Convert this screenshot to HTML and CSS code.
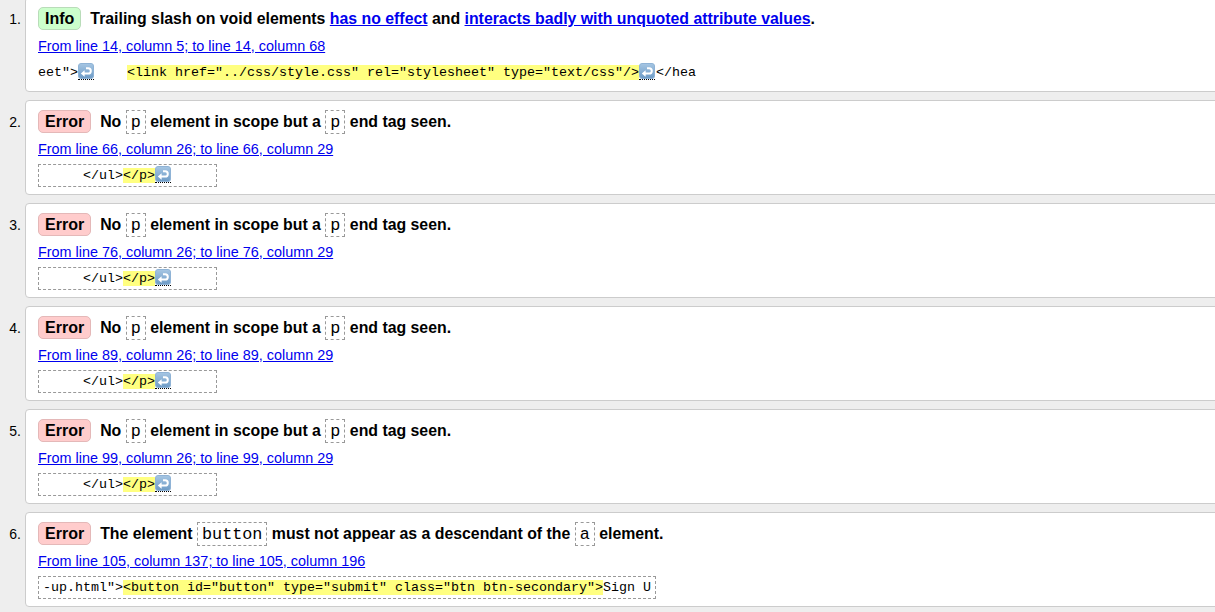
FILE: index.html
```html
<!DOCTYPE html>
<html lang="en">
<head>
<meta charset="utf-8">
<title>Validation results</title>
<link rel="stylesheet" href="styles.css">
</head>
<body>
<ol class="results">
  <li class="row">
    <span class="num">1.</span>
    <div class="card">
      <p class="msg"><strong class="badge info">Info</strong>Trailing slash on void elements <a href="#">has no effect</a> and <a href="#">interacts badly with unquoted attribute values</a>.</p>
      <p class="loc"><a href="#">From line 14, column 5; to line 14, column 68</a></p>
      <p class="ext"><code class="extract plain">eet"&gt;<b class="lf" title="Line break"><svg viewBox="0 0 16 16" width="16" height="16"><use href="#lfi"/></svg></b>    <mark>&lt;link href="../css/style.css" rel="stylesheet" type="text/css"/&gt;</mark><b class="lf" title="Line break"><svg viewBox="0 0 16 16" width="16" height="16"><use href="#lfi"/></svg></b>&lt;/hea</code></p>
    </div>
  </li>
  <li class="row">
    <span class="num">2.</span>
    <div class="card">
      <p class="msg"><strong class="badge error">Error</strong>No <code class="tag">p</code> element in scope but a <code class="tag">p</code> end tag seen.</p>
      <p class="loc"><a href="#">From line 66, column 26; to line 66, column 29</a></p>
      <p class="ext"><code class="extract">     &lt;/ul&gt;<mark>&lt;/p&gt;</mark><b class="lf" title="Line break"><svg viewBox="0 0 16 16" width="16" height="16"><use href="#lfi"/></svg></b>     </code></p>
    </div>
  </li>
  <li class="row">
    <span class="num">3.</span>
    <div class="card">
      <p class="msg"><strong class="badge error">Error</strong>No <code class="tag">p</code> element in scope but a <code class="tag">p</code> end tag seen.</p>
      <p class="loc"><a href="#">From line 76, column 26; to line 76, column 29</a></p>
      <p class="ext"><code class="extract">     &lt;/ul&gt;<mark>&lt;/p&gt;</mark><b class="lf" title="Line break"><svg viewBox="0 0 16 16" width="16" height="16"><use href="#lfi"/></svg></b>     </code></p>
    </div>
  </li>
  <li class="row">
    <span class="num">4.</span>
    <div class="card">
      <p class="msg"><strong class="badge error">Error</strong>No <code class="tag">p</code> element in scope but a <code class="tag">p</code> end tag seen.</p>
      <p class="loc"><a href="#">From line 89, column 26; to line 89, column 29</a></p>
      <p class="ext"><code class="extract">     &lt;/ul&gt;<mark>&lt;/p&gt;</mark><b class="lf" title="Line break"><svg viewBox="0 0 16 16" width="16" height="16"><use href="#lfi"/></svg></b>     </code></p>
    </div>
  </li>
  <li class="row">
    <span class="num">5.</span>
    <div class="card">
      <p class="msg"><strong class="badge error">Error</strong>No <code class="tag">p</code> element in scope but a <code class="tag">p</code> end tag seen.</p>
      <p class="loc"><a href="#">From line 99, column 26; to line 99, column 29</a></p>
      <p class="ext"><code class="extract">     &lt;/ul&gt;<mark>&lt;/p&gt;</mark><b class="lf" title="Line break"><svg viewBox="0 0 16 16" width="16" height="16"><use href="#lfi"/></svg></b>     </code></p>
    </div>
  </li>
  <li class="row">
    <span class="num">6.</span>
    <div class="card">
      <p class="msg"><strong class="badge error">Error</strong>The element <code class="tag">button</code> must not appear as a descendant of the <code class="tag">a</code> element.</p>
      <p class="loc"><a href="#">From line 105, column 137; to line 105, column 196</a></p>
      <p class="ext"><code class="extract">-up.html"&gt;<mark>&lt;button id="button" type="submit" class="btn btn-secondary"&gt;</mark>Sign U</code></p>
    </div>
  </li>
</ol>
<svg class="defs" width="0" height="0" aria-hidden="true">
  <defs>
    <linearGradient id="lfg" x1="0" y1="0" x2="0" y2="1">
      <stop offset="0" stop-color="#a6c6e3"/>
      <stop offset="1" stop-color="#6d9bc6"/>
    </linearGradient>
    <g id="lfi">
      <rect x="0.5" y="0.5" width="15" height="15" rx="2.5" fill="url(#lfg)" stroke="#8fb3d6"/>
      <path d="M6 10.5 H10.2 A2.6 2.6 0 0 0 10.2 5.3 H8" fill="none" stroke="#fff" stroke-width="2"/>
      <polygon points="2.8,10.5 6.6,7.3 6.6,13.7" fill="#fff"/>
    </g>
  </defs>
</svg>
</body>
</html>
```

FILE: styles.css
```css
html, body {
  margin: 0;
  padding: 0;
  overflow: hidden;
}

body {
  background: #eeeeee;
  color: #000;
  font-family: "Liberation Sans", Arial, sans-serif;
  font-size: 16px;
}

.results {
  list-style: none;
  margin: -3px -12px 0 0;
  padding: 0;
}

.row {
  display: flex;
  align-items: baseline;
  margin-bottom: 8px;
}

.num {
  flex: 0 0 25px;
  box-sizing: border-box;
  padding-right: 4px;
  text-align: right;
  font-size: 14px;
}

.card {
  flex: 1;
  background: #fff;
  border: 1px solid #cccccc;
  border-radius: 4px;
  padding: 9px 12px 7px 12px;
}

.msg {
  margin: 0;
  font-weight: 700;
  font-size: 15.85px;
  line-height: 24px;
}

.badge {
  display: inline-block;
  vertical-align: top;
  font-size: 16px;
  line-height: 21px;
  padding: 0 6px;
  border: 1px solid;
  border-radius: 5px;
  margin-right: 9px;
  font-weight: 700;
}

.badge.info {
  background: #ccffcc;
  border-color: #b9dcb9;
}

.badge.error {
  background: #ffcccc;
  border-color: #e4b8b8;
}

.tag {
  font-family: "Liberation Mono", "Courier New", monospace;
  font-weight: 400;
  font-size: 16.8px;
  line-height: 18px;
  padding: 2px 4px 1px 4px;
  border: 1px dashed #999999;
}

a {
  color: #0000ee;
  text-decoration: underline;
}

.loc {
  margin: 6px 0 0 0;
  font-size: 14.4px;
  line-height: 19px;
}

.ext {
  margin: 5px 0 0 0;
  line-height: 23px;
}

.extract {
  display: inline-block;
  vertical-align: top;
  font-family: "Liberation Mono", "Courier New", monospace;
  font-size: 13.333px;
  line-height: 21px;
  white-space: pre;
  border: 1px dashed #999999;
  padding: 0 4px;
}

.extract.plain {
  border-color: transparent;
  border-left-width: 0;
  border-right-width: 0;
  padding: 0;
}

mark {
  background: #ffff80;
  color: #000;
}

.lf {
  display: inline-block;
  width: 17px;
  height: 17px;
  vertical-align: -4px;
  line-height: 0;
  font-weight: 400;
}

.lf svg {
  display: block;
  width: 16px;
  height: 16px;
  border-bottom: 1px dotted #000;
}

.defs {
  position: absolute;
  width: 0;
  height: 0;
}
```
